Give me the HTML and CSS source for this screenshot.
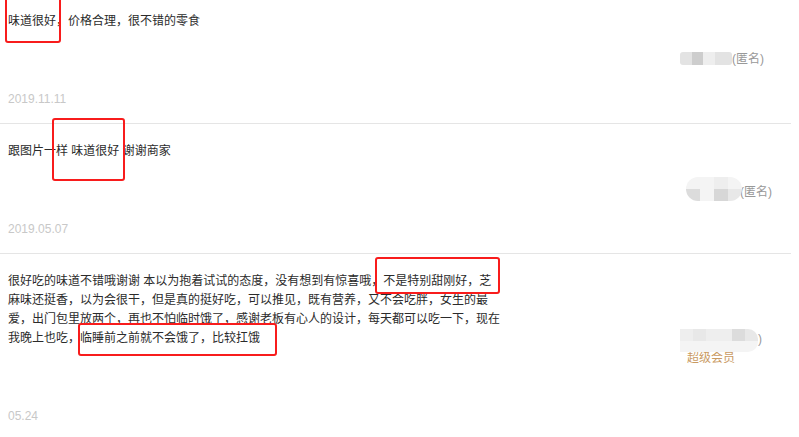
FILE: index.html
```html
<!doctype html>
<html>

<head>
	<meta charset="UTF-8">
	<meta name="viewport" content="width=device-width, initial-scale=1.0">
	<title>评价</title>
	<link rel="stylesheet" href="styles.css">
</head>

<body>
	<div class="page">
		<div class="rate-list">
			<!-- 评价1 -->
			<div class="rate-item">
				<div class="rate-main">
					<div class="rate-text">味道很好，价格合理，很不错的零食</div>
					<div class="rate-date">2019.11.11</div>
				</div>
				<div class="rate-user user-a">
					<div class="blur blur-a">
						<span class="g3"></span><span class="g6"></span><span class="g1"></span><span class="g3"></span>
					</div>
					<span class="nick">(匿名)</span>
				</div>
			</div>

			<!-- 评价2 -->
			<div class="rate-item">
				<div class="rate-main">
					<div class="rate-text">跟图片一样 味道很好 谢谢商家</div>
					<div class="rate-date">2019.05.07</div>
				</div>
				<div class="rate-user user-b">
					<div class="blur blur-b">
						<span class="g0"></span><span class="g0"></span><span class="g1"></span><span class="g0"></span>
						<span class="g4"></span><span class="g0"></span><span class="g5"></span><span class="g2"></span>
					</div>
					<span class="nick">(匿名)</span>
				</div>
			</div>

			<!-- 评价3 -->
			<div class="rate-item">
				<div class="rate-main">
					<div class="rate-text">很好吃的味道不错哦谢谢 本以为抱着试试的态度，没有想到有惊喜哦，不是特别甜刚好，芝麻味还挺香，以为会很干，但是真的挺好吃，可以推见，既有营养，又不会吃胖，女生的最爱，出门包里放两个，再也不怕临时饿了，感谢老板有心人的设计，每天都可以吃一下，现在我晚上也吃，临睡前之前就不会饿了，比较扛饿</div>
					<div class="rate-date">05.24</div>
				</div>
				<div class="rate-user user-c">
					<div class="user-line">
						<div class="blur blur-c">
							<span class="g1"></span><span class="g2"></span><span class="g1"></span><span class="g1"></span><span class="g4"></span><span class="g2"></span>
							<span class="g0"></span><span class="g0"></span><span class="g0"></span><span class="g0"></span><span class="g0"></span><span class="g0"></span>
						</div>
						<span class="nick nick-c">)</span>
					</div>
					<div class="vip">超级会员</div>
				</div>
			</div>
		</div>

		<!-- 标注框 -->
		<div class="mark mark-1"></div>
		<div class="mark mark-2"></div>
		<div class="mark mark-3"></div>
		<div class="mark mark-4"></div>
	</div>
</body>

</html>
```

FILE: styles.css
```css
body {
	margin: 0;
	padding: 0;
	background: #fff;
	font-family: "Liberation Sans", "Noto Sans CJK SC", sans-serif;
	font-size: 12px;
	color: #333;
}

.page {
	position: relative;
	height: 437px;
	overflow: hidden;
}

.rate-list {
	width: 791px;
	margin-top: -6px;
}

.rate-item {
	display: flex;
	align-items: center;
	border-bottom: 1px solid #e5e5e5;
}

.rate-main {
	flex: 0 0 664px;
	padding: 18px 0 14px 8px;
}

.rate-text {
	width: 494px;
	line-height: 19px;
	color: #2b2b2b;
}

.rate-date {
	margin-top: 59px;
	line-height: 19px;
	color: #c8c8c8;
}

.rate-user {
	display: flex;
	align-items: center;
	color: #999;
	line-height: 16px;
}

.user-a {
	margin-left: 8px;
}

.user-b {
	margin-left: 14px;
	align-items: flex-end;
}

.user-b .nick {
	margin-left: -2px;
	margin-bottom: 1px;
}

.user-c {
	margin-left: 8px;
	flex-direction: column;
	align-items: flex-start;
}

.user-line {
	display: flex;
	align-items: flex-start;
}

.nick-c {
	margin-top: 2px;
}

.vip {
	margin-left: 7px;
	margin-top: -2px;
	color: #c99a62;
	line-height: 16px;
}

/* 打码的昵称 */
.blur {
	display: grid;
	overflow: hidden;
	position: relative;
	z-index: 1;
}

.blur-a {
	grid-template-columns: 12px 11px 12px 17px;
	grid-template-rows: 13px;
	border-radius: 3px;
}

.blur-b {
	grid-template-columns: repeat(4, 14px);
	grid-template-rows: 12px 12px;
	border-radius: 12px;
}

.blur-c {
	grid-template-columns: repeat(6, 13px);
	grid-template-rows: 12px 11px;
	border-radius: 0 10px 10px 0;
}

.g0 { background: #f4f4f4; }
.g1 { background: #eeeeee; }
.g2 { background: #e8e8e8; }
.g3 { background: #e3e3e3; }
.g4 { background: #dcdcdc; }
.g5 { background: #d7d7d7; }
.g6 { background: #cdcdcd; }

/* 红色标注框 */
.mark {
	position: absolute;
	border: 2px solid #f81c1c;
	border-radius: 3px;
	box-sizing: border-box;
}

.mark-1 {
	left: 5px;
	top: -4px;
	width: 56px;
	height: 47px;
}

.mark-2 {
	left: 52px;
	top: 118px;
	width: 73px;
	height: 63px;
}

.mark-3 {
	left: 375px;
	top: 257px;
	width: 125px;
	height: 37px;
}

.mark-4 {
	left: 78px;
	top: 323px;
	width: 199px;
	height: 33px;
}
```
